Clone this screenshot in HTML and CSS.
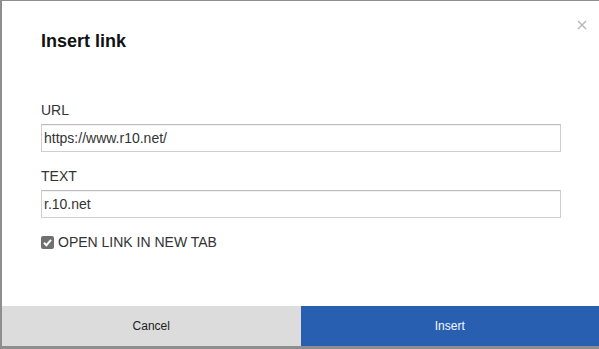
FILE: index.html
```html
<!DOCTYPE html>
<html lang="en">
<head>
    <meta charset="UTF-8">
    <title>Insert link</title>
    <link rel="stylesheet" href="styles.css">
</head>
<body>
    <div class="dialog">
        <div class="content">
            <button class="close" title="Close">
                <svg width="10" height="10" viewBox="0 0 10 10"><path d="M1 1 L9 9 M9 1 L1 9" stroke="#b8b8b8" stroke-width="1.4"/></svg>
            </button>
            <h2 class="title">Insert link</h2>
            <div class="field">
                <label for="url">URL</label>
                <input type="text" id="url" value="https://www.r10.net/">
            </div>
            <div class="field">
                <label for="text">TEXT</label>
                <input type="text" id="text" value="r.10.net">
            </div>
            <label class="check">
                <span class="box">
                    <svg width="13" height="13" viewBox="0 0 13 13"><rect x="0" y="0" width="13" height="13" rx="2" fill="#707070"/><path d="M3 6.8 L5.4 9.2 L10 3.8" stroke="#fff" stroke-width="2" fill="none"/></svg>
                </span>
                OPEN LINK IN NEW TAB
            </label>
        </div>
        <div class="footer">
            <button class="btn cancel">Cancel</button>
            <button class="btn insert">Insert</button>
        </div>
    </div>
</body>
</html>
```

FILE: styles.css
```css
html, body {
    margin: 0;
    height: 100%;
}
body {
    background: #8e8e8e;
    font-family: "Liberation Sans", Arial, sans-serif;
    color: #222;
    padding: 1px 0 3px 2px;
    box-sizing: border-box;
}
.dialog {
    background: #fff;
    height: 100%;
    display: flex;
    flex-direction: column;
}
.content {
    flex: 1;
    position: relative;
    padding: 29px 38px 0 39px;
}
.close {
    position: absolute;
    top: 19px;
    right: 12px;
    border: none;
    background: none;
    padding: 0;
    cursor: pointer;
}
.close svg {
    display: block;
}
.title {
    margin: 0 0 50px;
    font-size: 18px;
    line-height: 22px;
    font-weight: bold;
    color: #111;
}
.field {
    margin-bottom: 16px;
}
.field label {
    display: block;
    font-size: 14px;
    line-height: 16px;
    margin-bottom: 6px;
    color: #333;
}
.field input {
    display: block;
    width: 100%;
    box-sizing: border-box;
    height: 28px;
    border: 1px solid #cfcfcf;
    border-top-color: #bdbdbd;
    box-shadow: inset 0 1px 1px rgba(0, 0, 0, 0.06);
    padding: 0 2px;
    font-family: inherit;
    font-size: 14px;
    color: #333;
    outline: none;
}
.check {
    display: flex;
    align-items: center;
    gap: 4px;
    font-size: 14px;
    color: #333;
}
.box svg {
    display: block;
}
.footer {
    display: flex;
    height: 40px;
}
.btn {
    flex: 1;
    border: none;
    font-family: inherit;
    font-size: 12px;
    cursor: pointer;
}
.cancel {
    background: #dcdcdc;
    color: #222;
}
.insert {
    background: #295fb1;
    color: #f4f8ff;
}
```
